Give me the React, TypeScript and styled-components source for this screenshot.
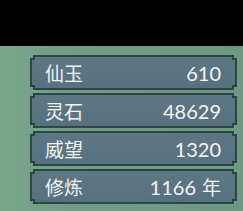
import styled, { createGlobalStyle } from 'styled-components';

const GlobalStyle = createGlobalStyle`
	html, body {
		margin: 0;
		padding: 0;
		background: #000;
	}
	body {
		width: 243px;
		height: 211px;
		overflow: hidden;
	}
`;

const stats = [
	{ label: '仙玉', value: '610' },
	{ label: '灵石', value: '48629' },
	{ label: '威望', value: '1320' },
	{ label: '修炼', value: '1166', unit: '年' },
];

const App = () => {
	return (
		<>
			<GlobalStyle />
			<Screen>
				<TopBar />
				<Panel>
					<List>
						{stats.map(s => (
							<Row key={s.label}>
								<Corner pos='tl' />
								<Corner pos='tr' />
								<Corner pos='bl' />
								<Corner pos='br' />
								<Label>{s.label}</Label>
								<Value>
									{s.value}
									{s.unit && <Unit>{s.unit}</Unit>}
								</Value>
							</Row>
						))}
					</List>
				</Panel>
			</Screen>
		</>
	);
};

const Screen = styled.div`
	width: 243px;
	height: 211px;
	display: flex;
	flex-direction: column;
`;

const TopBar = styled.div`
	height: 46px;
	background: #000;
`;

const Panel = styled.div`
	flex: 1;
	background: linear-gradient(90deg, #7aa68e 0%, #719b85 30%, #6f9883 100%);
	padding: 9px 6px 0 30px;
`;

const List = styled.div`
	display: flex;
	flex-direction: column;
	gap: 3px;
	width: 207px;
`;

const Row = styled.div`
	position: relative;
	height: 35px;
	box-sizing: border-box;
	border: 2px solid #2c4644;
	border-radius: 2px;
	background: linear-gradient(180deg, #5e7784 0%, #587180 100%);
	display: flex;
	align-items: center;
	justify-content: space-between;
	padding: 0 14px 0 13px;
	color: #f2f4f2;
`;

const Corner = styled.span<{ pos: 'tl' | 'tr' | 'bl' | 'br' }>`
	position: absolute;
	width: 3px;
	height: 3px;
	background: #719b85;
	border: 2px solid #2c4644;
	${p => (p.pos[0] === 't' ? 'top: -2px;' : 'bottom: -2px;')}
	${p => (p.pos[1] === 'l' ? 'left: -2px;' : 'right: -2px;')}
	${p =>
		p.pos === 'tl'
			? 'border-top: none; border-left: none; border-bottom-right-radius: 1px;'
			: p.pos === 'tr'
			? 'border-top: none; border-right: none;'
			: p.pos === 'bl'
			? 'border-bottom: none; border-left: none;'
			: 'border-bottom: none; border-right: none;'}
`;

const Label = styled.span`
	font-family: 'Noto Sans CJK SC', sans-serif;
	font-size: 19px;
	line-height: 1;
	letter-spacing: 0px;
`;

const Value = styled.span`
	font-family: Lato, 'Noto Sans CJK SC', sans-serif;
	font-size: 20px;
	line-height: 1;
	display: flex;
	align-items: center;
`;

const Unit = styled.span`
	font-family: 'Noto Sans CJK SC', sans-serif;
	font-size: 19px;
	margin-left: 6px;
`;

export default App;
